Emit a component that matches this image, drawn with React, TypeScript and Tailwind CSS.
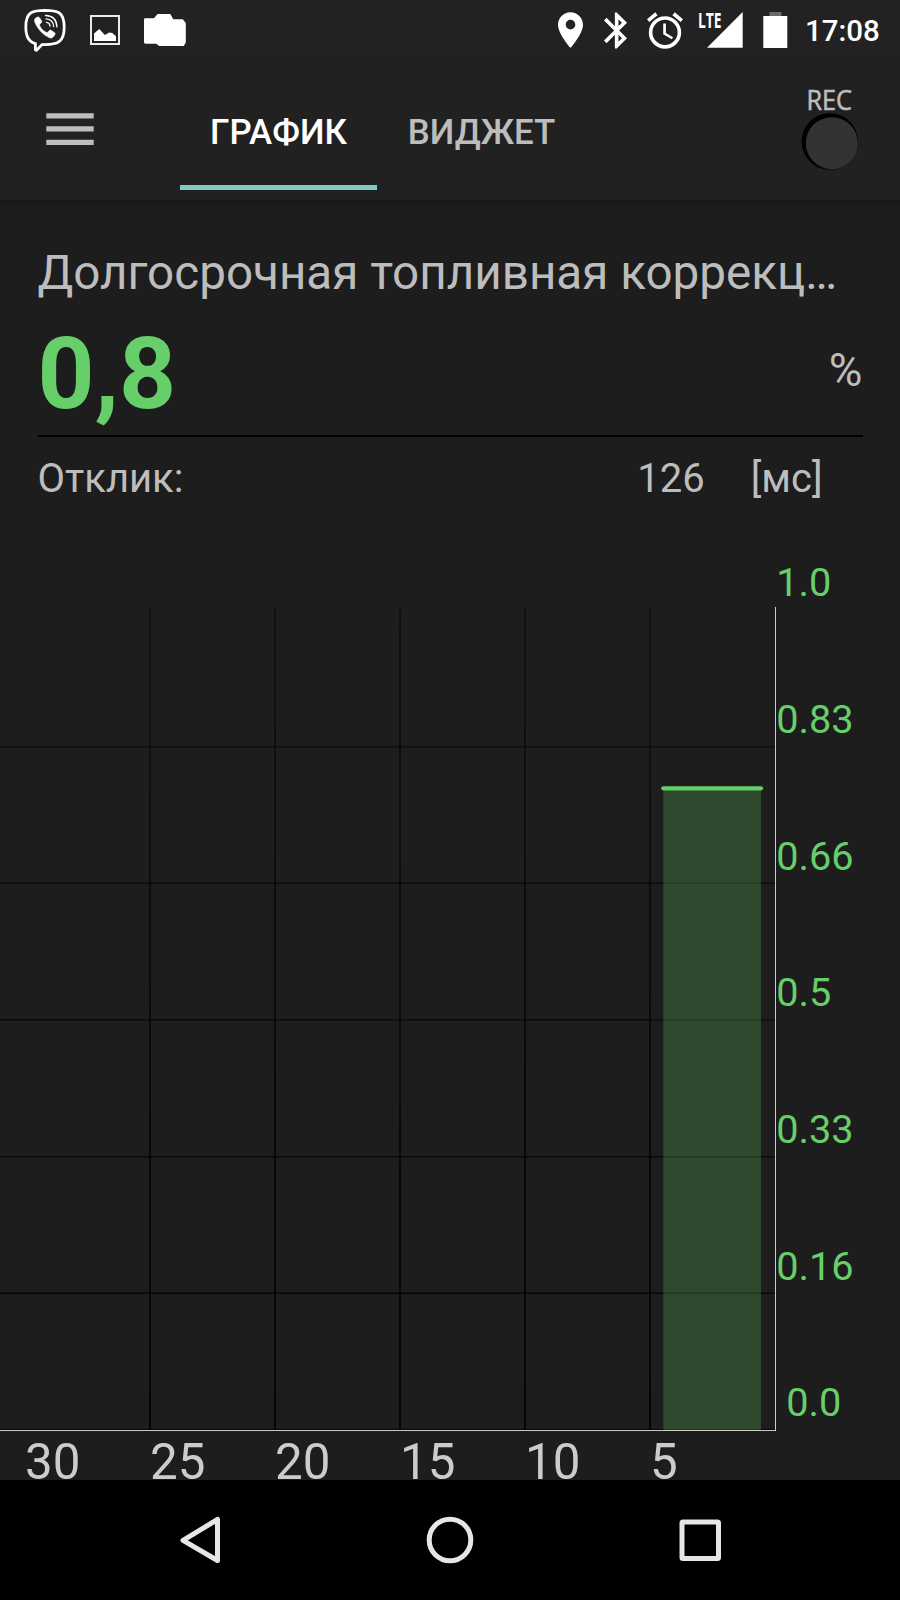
import React from 'react';

/** Couleur principale de la courbe */
const GREEN = '#67cf69';

/** Graduations de l'axe vertical, de haut en bas */
const Y_LABELS = ['1.0', '0.83', '0.66', '0.5', '0.33', '0.16', '0.0'];

/** Graduations de l'axe du temps (secondes) */
const X_LABELS = ['30', '25', '20', '15', '10', '5'];

const StatusBar: React.FC = () => (
  <div className="flex h-[60px] shrink-0 items-start bg-[#222222] pl-6 text-white">
    <svg className="mr-6 mt-[9px] h-[43px] w-[42px]" viewBox="24 9 42 43" fill="none" stroke="currentColor">
      <path
        d="M45 10.400c-6 0-10.800.4-14 2.400-4.300 2.700-5.200 7.400-5.200 14.400 0 6.600 1.300 11.300 5 14.200 1.400 1.100 2.900 1.800 4.600 2.300v5.800c0 .8.8 1 1.400.4l5.200-5.300h3c6 0 10.800-.6 14-2.900 4.200-3 5.200-7.600 5.200-14.500 0-7-1-11.700-5.200-14.400-3.200-2-8-2.400-14-2.400z"
        strokeWidth="2.800"
      />
      <path
        d="M35.300 18.300l2.300-1.300c.8-.3 1.400 0 1.900.7l2 3c.5.9.3 1.600-.4 2.200l-1.100 1c-.6.6-.5 1.200-.2 2 1.300 3 3.500 5.200 6.600 6.400.7.300 1.200.3 1.700-.3l1-1.300c.6-.7 1.300-.8 2.100-.3l3.200 2.100c.8.6.9 1.300.5 2.100-.8 1.600-1.900 2.800-3.300 3.400-.6.2-1.200.1-1.700-.1-6.700-3-11.600-7.900-14.900-15.300-.6-1.500-.8-3.400.3-4.300z"
        fill="currentColor"
        strokeWidth="0.600"
      />
      <path d="M46.500 22.400c2.200.2 3.300 1.300 3.500 3.600M46 18.900c4.600.2 7.300 2.800 7.600 7.600M45.500 15.500c7 .2 11.200 4.400 11.400 11.400" strokeWidth="1.300" strokeLinecap="round" />
    </svg>
    <svg className="mr-6 mt-[15px] h-[30px] w-[30px]" viewBox="90 15 30 30">
      <rect x="91" y="16" width="28" height="28" fill="none" stroke="#eee8ee" strokeWidth="2" />
      <path d="M94 41v-7.500l5.300-4.500 5.500 6 4.500-2.500 3 .5 3.700 3.200V41z" fill="currentColor" />
    </svg>
    <svg className="mt-[14px] h-8 w-[42px]" viewBox="144 14 42 32" fill="currentColor">
      <path d="M144 19.500q0-1.300 1.300-1.300h8.700l3.600-4.200h12.700l3 5.300h9.500l3 3.700v19.500l-2 3.500h-24.500l-3-2.300H145.500q-1.500 0-1.500-1.400z" />
    </svg>

    <svg className="ml-[372px] mt-3 h-9 w-[25px]" viewBox="5 2 14 20" fill="currentColor">
      <path d="M12 2C8.130 2 5 5.130 5 9c0 5.250 7 13 7 13s7-7.750 7-13c0-3.870-3.130-7-7-7zm0 9.700a2.700 2.700 0 1 1 0-5.400 2.700 2.700 0 0 1 0 5.400z" />
    </svg>
    <svg className="ml-[21px] mt-3 h-[37px] w-[23px]" viewBox="5 2 12.710 20" fill="currentColor">
      <path d="M17.710 7.710L12 2h-1v7.590L6.410 5 5 6.410 10.590 12 5 17.590 6.410 19 11 14.410V22h1l5.710-5.710-4.300-4.290 4.300-4.290zM13 5.830l1.880 1.880L13 9.590V5.830zm1.880 10.460L13 18.170v-3.760l1.880 1.880z" />
    </svg>
    <svg className="ml-5 mt-[12px] h-[37px] w-[36px]" viewBox="2 1.860 20 20.140" fill="currentColor">
      <path d="M22 5.720l-4.600-3.860-1.290 1.530 4.600 3.860L22 5.720zM7.880 3.390L6.600 1.860 2 5.710l1.290 1.530 4.590-3.850zM12.500 8H11v6l4.750 2.850.75-1.230-4-2.370V8zM12 4a9 9 0 1 0 0 18 9 9 0 0 0 0-18zm0 16a7 7 0 1 1 0-14 7 7 0 0 1 0 14z" />
    </svg>
    <svg className="ml-[15px] mt-3 h-9 w-[45px] overflow-visible" viewBox="698 12 45 36" fill="currentColor">
      <path d="M707 47.700h35.700V12z" />
      <text x="698" y="27.700" fontSize="20.500" fontWeight="700" textLength="23.500" lengthAdjust="spacingAndGlyphs" fontFamily="Open Sans, sans-serif">
        LTE
      </text>
    </svg>
    <svg className="ml-5 mt-3 h-9 w-[25px]" viewBox="763 12 25 36">
      <path d="M769.500 12h12v4h-12z" fill="#6a6a6a" />
      <path d="M763.300 16h24v32h-24z" fill="currentColor" />
    </svg>
    <span className="ml-[17px] mt-[13px] text-[29.500px] font-medium leading-9">17:08</span>
  </div>
);

const Header: React.FC = () => (
  <header className="relative flex h-[140px] shrink-0 items-start bg-[#212121] shadow-[0_2px_8px_rgba(0,0,0,0.35)]">
    <svg className="ml-[46px] mt-[53px] h-8 w-12" viewBox="0 0 48 32" fill="#bdbdbd">
      <path d="M0.300 0.300h47.400v5.200H0.300zM0.300 13.300h47.400v5.200H0.300zM0.300 26.800h47.400V32H0.300z" />
    </svg>
    <nav className="ml-[86px] mt-[50px] flex h-20 text-[34.800px] font-medium leading-[44px]">
      <span className="w-[197px] border-b-[5px] border-[#80cbc4] text-center text-white">ГРАФИК</span>
      <span className="w-[209px] text-center text-[#bdbdbd]">ВИДЖЕТ</span>
    </nav>
    <svg className="ml-[214px] mt-[24px] h-[90px] w-[62px] overflow-visible" viewBox="800 84 62 90">
      <text
        x="806.500"
        y="109.700"
        fontSize="27.500"
        fill="#bdbdbd"
        stroke="#bdbdbd"
        strokeWidth="0.600"
        textLength="45.500"
        lengthAdjust="spacingAndGlyphs"
        fontFamily="Open Sans, sans-serif"
      >
        REC
      </text>
      <circle cx="829.800" cy="141.500" r="28.300" fill="#000" />
      <circle cx="831.800" cy="143.200" r="26" fill="#333333" />
    </svg>
  </header>
);

const Readings: React.FC = () => (
  <section className="flex shrink-0 flex-col px-[37.500px] pt-[45px] text-[#bdbdbd]">
    <h1 className="whitespace-nowrap text-[47.600px] leading-[57px]">Долгосрочная топливная коррекц…</h1>
    <div className="mt-[14px] flex h-[119px] justify-between">
      <span className="text-[99.500px] font-bold leading-[116px] text-[#67cf69]">0,8</span>
      <span className="mt-[26px] text-[46px] leading-[56px]">%</span>
    </div>
    <div className="h-[2px] bg-black" />
    <div className="mt-[17px] flex text-[40px] leading-[50px]">
      <span>Отклик:</span>
      <span className="ml-auto">126</span>
      <span className="ml-[46px] mr-[40px]">[мс]</span>
    </div>
  </section>
);

const Chart: React.FC = () => (
  <svg className="-mt-[3px] h-[979px] w-[900px] shrink-0 overflow-visible" viewBox="0 501 900 979">
    <defs>
      <linearGradient id="gridFade" gradientUnits="userSpaceOnUse" x1="0" y1="607" x2="0" y2="1430">
        <stop offset="0" stopColor="#000" stopOpacity="0.4" />
        <stop offset="1" stopColor="#000" stopOpacity="0.85" />
      </linearGradient>
    </defs>

    {/* Grille */}
    {X_LABELS.slice(1).map((label, i) => (
      <rect key={label} x={149 + i * 125} y="607" width="2" height="823" fill="url(#gridFade)" />
    ))}
    {[746, 882.500, 1019, 1156, 1292.500, 1429].map((y) => (
      <rect key={y} x="0" y={y} width="775" height="1.500" fill="url(#gridFade)" />
    ))}

    {/* Courbe et remplissage */}
    <rect x="663.300" y="788" width="97.700" height="642" fill={GREEN} fillOpacity="0.25" />
    <path d="M663.300 788.300H761" stroke={GREEN} strokeWidth="4.300" strokeLinecap="round" />

    {/* Axes */}
    <rect x="775" y="607" width="1" height="824" fill="#cccccc" />
    <rect x="0" y="1430" width="776" height="1" fill="#cccccc" />

    {Y_LABELS.map((label, i) => (
      <text key={label} x={i === Y_LABELS.length - 1 ? 786.3 : 776.3} y={596.3 + i * 136.67} fontSize="39.700" fill={GREEN}>
        {label}
      </text>
    ))}
    {X_LABELS.map((label, i) => (
      <text key={label} x={25 + i * 125} y="1479" fontSize="49.300" fill="#cccccc">
        {label}
      </text>
    ))}
  </svg>
);

const NavigationBar: React.FC = () => (
  <footer className="relative flex h-[120px] shrink-0 items-center bg-black px-[75px] text-[#e6e6e6]">
    {[
      <path key="back" d="M8 25.300L42.500 4.500v41z" />,
      <circle key="home" cx="25" cy="25" r="20.800" />,
      <rect key="recent" x="7" y="7" width="36.500" height="36.500" rx="1" />,
    ].map((shape) => (
      <span key={shape.key} className="flex flex-1 justify-center">
        <svg className="h-[50px] w-[50px]" viewBox="0 0 50 50" fill="none" stroke="currentColor" strokeWidth="5" strokeLinejoin="round">
          {shape}
        </svg>
      </span>
    ))}
  </footer>
);

export const App: React.FC = () => (
  <div className="flex h-[1600px] w-[900px] flex-col overflow-hidden bg-[#1d1d1d] font-[Roboto,sans-serif]">
    <StatusBar />
    <Header />
    <Readings />
    <Chart />
    <NavigationBar />
  </div>
);

export default App;
